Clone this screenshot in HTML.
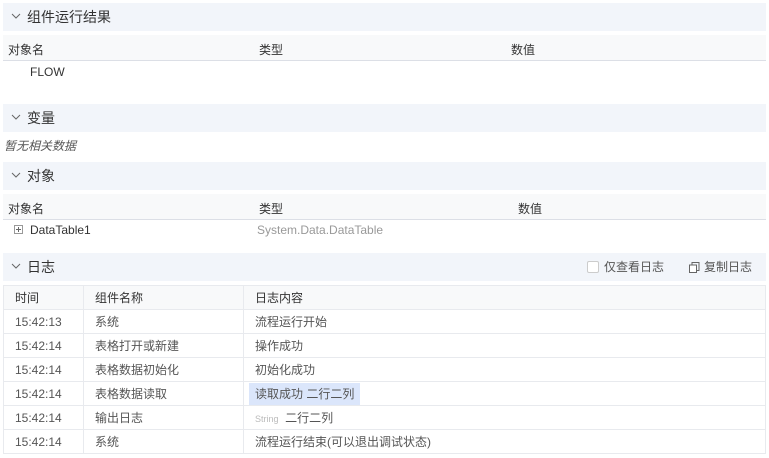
<!DOCTYPE html>
<html><head><meta charset="utf-8"><style>
*{margin:0;padding:0;box-sizing:border-box}
body{width:769px;height:458px;background:#fff;font-family:"Liberation Sans","Noto Sans CJK SC",sans-serif;font-size:12px;color:#333;position:relative;overflow:hidden}
.a{position:absolute;white-space:nowrap}
.hd{position:absolute;left:3px;width:763px;height:28px;background:#f2f5fa;font-size:14px;line-height:28px;padding-left:24px;color:#333}
.hd svg{position:absolute;left:8px;top:10px}
.th{position:absolute;left:3px;width:763px;height:26px;background:#f8f9fa;border-bottom:1px solid #dcdfe6}
table{position:absolute;left:3px;top:285px;width:763px;border-collapse:collapse}
td{border:1px solid #e8eaee;height:24px;padding-left:11px;color:#555;font-size:12px}
tr.h td{background:#f8f9fa;color:#333}
</style></head><body>
<div class="hd" style="top:3px"><svg width="10" height="7"><path d="M1 1L5 5L9 1" stroke="#666" fill="none"/></svg>组件运行结果</div>
<div class="th" style="top:35px"></div>
<div class="a" style="left:8px;top:41px">对象名</div><div class="a" style="left:259px;top:41px">类型</div><div class="a" style="left:511px;top:41px">数值</div>
<div class="a" style="left:30px;top:65px">FLOW</div>
<div class="hd" style="top:104px"><svg width="10" height="7"><path d="M1 1L5 5L9 1" stroke="#666" fill="none"/></svg>变量</div>
<div class="a" style="left:4px;top:137px;font-style:italic;color:#555">暂无相关数据</div>
<div class="hd" style="top:162px"><svg width="10" height="7"><path d="M1 1L5 5L9 1" stroke="#666" fill="none"/></svg>对象</div>
<div class="th" style="top:194px"></div>
<div class="a" style="left:8px;top:200px">对象名</div><div class="a" style="left:259px;top:200px">类型</div><div class="a" style="left:518px;top:200px">数值</div>
<svg class="a" style="left:14px;top:225px" width="9" height="9"><rect x="0.5" y="0.5" width="8" height="8" fill="none" stroke="#999"/><path d="M2 4.5H7M4.5 2V7" stroke="#666"/></svg>
<div class="a" style="left:30px;top:223px">DataTable1</div>
<div class="a" style="left:257px;top:223px;color:#999">System.Data.DataTable</div>
<div class="hd" style="top:253px"><svg width="10" height="7"><path d="M1 1L5 5L9 1" stroke="#666" fill="none"/></svg>日志
<span class="a" style="left:584px;top:8px;width:12px;height:12px;border:1px solid #ccc;border-radius:2px;background:#fff"></span>
<span class="a" style="left:601px;top:0;font-size:12px;color:#555">仅查看日志</span>
<svg class="a" style="left:686px;top:9px" width="11" height="11"><rect x="3" y="0.5" width="7" height="8" fill="none" stroke="#666"/><rect x="0.5" y="3" width="7" height="7.5" fill="#fff" stroke="#666"/></svg>
<span class="a" style="left:701px;top:0;font-size:12px;color:#555">复制日志</span></div>
<table>
<colgroup><col style="width:80px"><col style="width:160px"><col></colgroup>
<tr class="h"><td>时间</td><td>组件名称</td><td>日志内容</td></tr>
<tr><td>15:42:13</td><td>系统</td><td>流程运行开始</td></tr>
<tr><td>15:42:14</td><td>表格打开或新建</td><td>操作成功</td></tr>
<tr><td>15:42:14</td><td>表格数据初始化</td><td>初始化成功</td></tr>
<tr><td>15:42:14</td><td>表格数据读取</td><td style="padding-left:5px"><span style="display:inline-block;background:#dbe6fb;padding:0 6px;line-height:22px">读取成功 二行二列</span></td></tr>
<tr><td>15:42:14</td><td>输出日志</td><td><span style="font-size:9px;color:#bbb">String</span>&nbsp; 二行二列</td></tr>
<tr><td>15:42:14</td><td>系统</td><td>流程运行结束(可以退出调试状态)</td></tr>
</table>
</body></html>
